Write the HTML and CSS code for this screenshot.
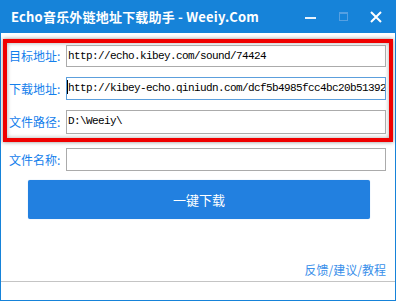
FILE: index.html
```html
<!DOCTYPE html>
<html lang="zh-CN">
<head>
    <meta charset="UTF-8">
    <title>Echo音乐外链地址下载助手</title>
    <link rel="stylesheet" href="styles.css">
</head>
<body>
    <div class="window">
        <div class="titlebar">
            <span class="title">Echo音乐外链地址下载助手 - Weeiy.Com</span>
            <div class="controls">
                <svg class="ctl" width="14" height="14" viewBox="0 0 14 14">
                    <rect x="1" y="7" width="11" height="2" fill="#e8f2fc"/>
                </svg>
                <svg class="ctl ctl-max" width="14" height="14" viewBox="0 0 14 14">
                    <rect x="2.5" y="2.5" width="8" height="8" fill="none" stroke="#55a0e2" stroke-width="1"/>
                    <rect x="2" y="2" width="9" height="2" fill="#55a0e2"/>
                </svg>
                <svg class="ctl" width="14" height="14" viewBox="0 0 14 14">
                    <path d="M2 2 L12 12 M12 2 L2 12" stroke="#ffffff" stroke-width="2"/>
                </svg>
            </div>
        </div>
        <div class="content">
            <div class="redbox">
                <div class="row">
                    <label>目标地址:</label>
                    <div class="field">http://echo.kibey.com/sound/74424</div>
                </div>
                <div class="row">
                    <label>下载地址:</label>
                    <div class="field focus"><span class="caret"></span>http://kibey-echo.qiniudn.com/dcf5b4985fcc4bc20b51392</div>
                </div>
                <div class="row">
                    <label>文件路径:</label>
                    <div class="field tall">D:\Weeiy\</div>
                </div>
            </div>
            <div class="row plain">
                <label>文件名称:</label>
                <div class="field"></div>
            </div>
            <button class="download">一键下载</button>
            <div class="links">反馈/建议/教程</div>
        </div>
        <div class="statusbar"></div>
    </div>
</body>
</html>
```

FILE: styles.css
```css
body{
    margin: 0;
    font-family: "Noto Sans CJK SC", "Noto Sans", sans-serif;
}
.window{
    width: 396px;
    height: 301px;
    box-sizing: border-box;
    border: 1px solid #1683d9;
    border-top: none;
    display: flex;
    flex-direction: column;
    background: #fff;
}
.titlebar{
    height: 33px;
    background: #1683d9;
    display: flex;
    align-items: center;
    padding-left: 10px;
}
.title{
    color: #fff;
    font-weight: bold;
    font-size: 13px;
    letter-spacing: 0.2px;
    margin-top: -1px;
}
.controls{
    margin-left: auto;
    display: flex;
    align-items: center;
}
.ctl{
    margin-right: 18px;
}
.ctl:first-child{
    margin-right: 19px;
}
.ctl:last-child{
    margin-right: 12px;
}
.content{
    flex: 1;
    padding: 6px 2px 0 2px;
}
.redbox{
    border: 4px solid #f00000;
    padding: 2px 3px 4px 2px;
    box-shadow: 0 0 4px rgba(0,0,0,0.45), inset 0 0 4px rgba(0,0,0,0.35);
}
.row{
    display: flex;
    align-items: center;
    margin-bottom: 10px;
}
.redbox .row:last-child{
    margin-bottom: 0;
}
.row label{
    width: 57px;
    color: #1480ec;
    font-size: 12px;
    line-height: 16px;
}
.field{
    flex: 1;
    height: 22px;
    box-sizing: border-box;
    border: 1px solid #ababab;
    font-family: "Liberation Mono", monospace;
    font-size: 11px;
    letter-spacing: -0.6px;
    line-height: 20px;
    padding-left: 1px;
    white-space: nowrap;
    overflow: hidden;
}
.focus{
    border-color: #5c9fdc;
    height: 23px;
    padding-left: 0;
}
.tall{
    height: 24px;
}
.caret{
    display: inline-block;
    width: 1px;
    height: 14px;
    background: #000;
    vertical-align: -3px;
}
.plain{
    margin: 6px 7px 0 6px;
}
.plain .field{
    height: 23px;
}
.download{
    display: block;
    width: 342px;
    height: 39px;
    margin: 9px 0 0 25px;
    border: none;
    border-radius: 2px;
    background: #2280e0;
    box-shadow: 0 0 1px #8fc0f0;
    color: #fff;
    font-family: "Noto Sans CJK SC", sans-serif;
    font-size: 13px;
}
.links{
    text-align: right;
    color: #3a8fea;
    font-size: 12px;
    margin: 43px 7px 0 0;
    line-height: 16px;
}
.statusbar{
    height: 18px;
    border-top: 1px solid #c4c4c4;
}
```
